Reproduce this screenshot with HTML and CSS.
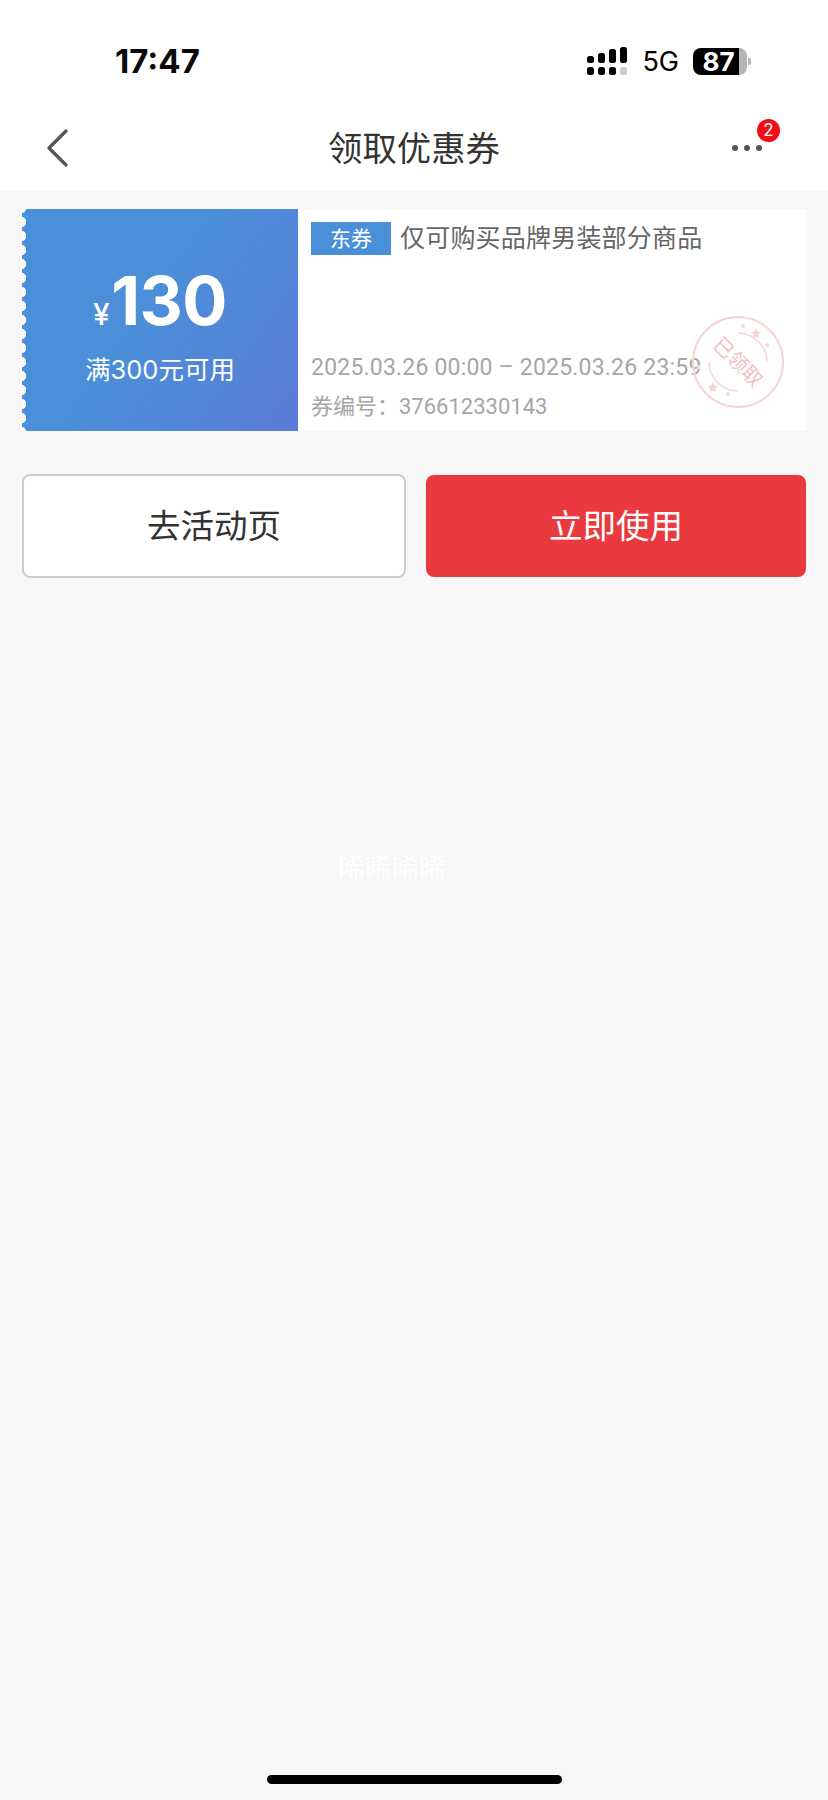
FILE: index.html
```html
<!DOCTYPE html>
<html lang="zh-CN">
<head>
    <meta charset="UTF-8">
    <meta name="viewport" content="width=device-width, initial-scale=1.0">
    <title>领取优惠券</title>
    <link rel="stylesheet" href="styles.css">
</head>
<body>
    <div class="page">
        <div class="top">
            <div class="status-bar">
                <span class="time">17:47</span>
                <div class="status-right">
                    <svg class="signal" width="40" height="29" viewBox="0 0 40 29">
                        <rect x="0" y="9" width="7" height="7" rx="2.5" fill="#000"/>
                        <rect x="11" y="6" width="7" height="10" rx="2.5" fill="#000"/>
                        <rect x="22" y="2" width="7" height="14" rx="2.5" fill="#000"/>
                        <rect x="33" y="0" width="7" height="16" rx="2.5" fill="#000"/>
                        <rect x="0" y="20" width="7" height="8" rx="2.5" fill="#000"/>
                        <rect x="11" y="20" width="7" height="8" rx="2.5" fill="#000"/>
                        <rect x="22" y="20" width="7" height="8" rx="2.5" fill="#000"/>
                        <rect x="33" y="20" width="7" height="8" rx="2.5" fill="#ccc"/>
                    </svg>
                    <span class="net">5G</span>
                    <div class="battery">
                        <div class="battery-body"><span>87</span></div>
                        <div class="battery-nub"></div>
                    </div>
                </div>
            </div>
            <div class="nav">
                <svg class="back" width="22" height="38" viewBox="0 0 22 38">
                    <path d="M19 2 L2 19 L19 36" fill="none" stroke="#555" stroke-width="3.2" stroke-linecap="round" stroke-linejoin="round"/>
                </svg>
                <div class="nav-title">领取优惠券</div>
                <div class="more">
                    <i></i><i></i><i></i>
                    <span class="badge">2</span>
                </div>
            </div>
        </div>

        <div class="coupon">
            <div class="coupon-left">
                <div class="amount"><span class="yen">¥</span>130</div>
                <div class="condition">满300元可用</div>
            </div>
            <div class="coupon-right">
                <div class="coupon-title">
                    <span class="tag">东券</span>
                    <span class="desc">仅可购买品牌男装部分商品</span>
                </div>
                <div class="coupon-meta">
                    <div class="dates">2025.03.26 00:00 – 2025.03.26 23:59</div>
                    <div class="code">券编号：376612330143</div>
                </div>
                <svg class="stamp" width="94" height="94" viewBox="0 0 94 94">
                    <circle cx="47" cy="47" r="45" fill="none" stroke="#f6d5d7" stroke-width="2"/>
                    <path d="M47 18 A29 29 0 0 1 76 47" fill="none" stroke="#f6d5d7" stroke-width="1.5"/>
                    <path d="M47 76 A29 29 0 0 1 18 47" fill="none" stroke="#f6d5d7" stroke-width="1.5"/>
                    <circle cx="52" cy="11" r="2" fill="#f6d5d7"/>
                    <polygon points="65,13 66.5,16.5 70,17 67.5,19.5 68,23 65,21.5 62,23 62.5,19.5 60,17 63.5,16.5" fill="#f6d5d7"/>
                    <circle cx="76" cy="30" r="2" fill="#f6d5d7"/>
                    <circle cx="8" cy="52" r="2" fill="#f9e3e4"/>
                    <polygon points="22,67 23.5,70.5 27,71 24.5,73.5 25,77 22,75.5 19,77 19.5,73.5 17,71 20.5,70.5" fill="#f6d5d7"/>
                    <circle cx="37" cy="79" r="2" fill="#f6d5d7"/>
                    <text x="47" y="54" transform="rotate(45 47 47)" text-anchor="middle" class="stamp-text">已领取</text>
                </svg>
            </div>
        </div>

        <div class="actions">
            <div class="btn btn-ghost">去活动页</div>
            <div class="btn btn-red">立即使用</div>
        </div>

        <div class="watermark">晞晞晞晞</div>
        <div class="home-bar"></div>
    </div>
</body>
</html>
```

FILE: styles.css
```css
body, html {
    margin: 0;
    padding: 0;
    background-color: #f7f7f7;
    font-family: Inter, "Noto Sans CJK SC", sans-serif;
}
.page {
    position: relative;
    width: 828px;
    height: 1800px;
    overflow: hidden;
}
.top {
    background-color: #ffffff;
    height: 191px;
}
.status-bar {
    display: flex;
    justify-content: space-between;
    align-items: center;
    height: 86px;
    padding: 18px 77px 0 115px;
}
.time {
    font-size: 33px;
    font-weight: 700;
    color: #0a0a0a;
}
.status-right {
    display: flex;
    align-items: center;
}
.signal {
    margin-right: 15px;
}
.net {
    font-size: 27px;
    color: #000;
    margin-right: 14px;
}
.battery {
    display: flex;
    align-items: center;
}
.battery-body {
    width: 46px;
    height: 27px;
    padding-right: 8px;
    background: linear-gradient(to right, #000 46px, #b5b5b5 46px);
    border-radius: 8px;
    display: flex;
    align-items: center;
    justify-content: center;
    color: #fff;
    font-size: 26px;
    font-weight: 700;
}
.battery-body span {
    margin-left: 5px;
}
.battery-nub {
    width: 3px;
    height: 7px;
    margin-left: 1px;
    background-color: #b5b5b5;
    border-radius: 0 2px 2px 0;
}
.nav {
    position: relative;
    height: 87px;
    display: flex;
    justify-content: center;
    align-items: center;
}
.back {
    position: absolute;
    left: 47px;
    top: 25px;
}
.nav-title {
    font-size: 34.4px;
    color: #333;
    padding-bottom: 3px;
}
.more {
    position: absolute;
    left: 732px;
    top: 41px;
    display: flex;
    gap: 6px;
}
.more i {
    display: block;
    width: 6px;
    height: 6px;
    border-radius: 50%;
    background-color: #555;
}
.badge {
    position: absolute;
    left: 25px;
    top: -26px;
    width: 23px;
    height: 23px;
    border-radius: 50%;
    background-color: #f30d17;
    color: #fff;
    font-size: 17px;
    line-height: 23px;
    text-align: center;
}
.coupon {
    display: flex;
    height: 222px;
    margin: 18px 22px 0;
    background-color: #ffffff;
}
.coupon-left {
    width: 276px;
    box-sizing: border-box;
    padding-top: 60px;
    display: flex;
    flex-direction: column;
    align-items: center;
    color: #fff;
    background:
        radial-gradient(circle at -1px 7px, #fbfbfb 0, #fbfbfb 5px, transparent 5.5px) 0 6px / 6px 14px repeat-y,
        linear-gradient(125deg, #4a90d9 0%, #4a8fd8 45%, #5c7bd6 100%);
    border-radius: 4px 0 0 4px;
}
.amount {
    font-size: 67px;
    font-weight: 700;
    line-height: 64px;
    letter-spacing: -0.5px;
}
.yen {
    font-size: 30px;
    font-weight: 500;
    margin-right: 2px;
}
.condition {
    font-size: 25.5px;
    line-height: 34px;
    margin-top: 7px;
}
.coupon-right {
    position: relative;
    flex: 1;
    box-sizing: border-box;
    padding: 13px 0 8px 13px;
    display: flex;
    flex-direction: column;
    justify-content: space-between;
}
.coupon-title {
    display: flex;
    align-items: flex-start;
}
.tag {
    width: 80px;
    height: 33px;
    line-height: 33px;
    text-align: center;
    font-size: 21px;
    color: #fff;
    background-color: #4a90d9;
    margin-right: 9px;
}
.desc {
    font-size: 25px;
    line-height: 30px;
    letter-spacing: 0.2px;
    margin-top: 1px;
    color: #666;
}
.dates, .code {
    font-family: Roboto, "Noto Sans CJK SC", sans-serif;
    color: #a6a6a6;
}
.dates {
    font-size: 23px;
    line-height: 34px;
    letter-spacing: 0.2px;
    margin-bottom: 6px;
}
.code {
    line-height: 32px;
    font-size: 22px;
}
.stamp {
    position: absolute;
    left: 393px;
    top: 106px;
}
.stamp-text {
    font-size: 20px;
    fill: #f3c0c3;
}
.actions {
    display: flex;
    gap: 20px;
    margin: 43px 22px 0;
}
.btn {
    height: 104px;
    box-sizing: border-box;
    padding-bottom: 6px;
    border-radius: 8px;
    display: flex;
    align-items: center;
    justify-content: center;
    font-size: 33.5px;
}
.btn-ghost {
    width: 384px;
    background-color: #ffffff;
    border: 2px solid #cccccc;
    color: #333;
}
.btn-red {
    width: 380px;
    height: 102px;
    margin-top: 1px;
    background-color: #ea3a3f;
    color: #fff;
}
.watermark {
    position: absolute;
    left: 338px;
    top: 851px;
    font-size: 27px;
    line-height: 36px;
    color: #ffffff;
}
.home-bar {
    position: absolute;
    left: 267px;
    top: 1775px;
    width: 295px;
    height: 9px;
    border-radius: 5px;
    background-color: #000;
}
```
